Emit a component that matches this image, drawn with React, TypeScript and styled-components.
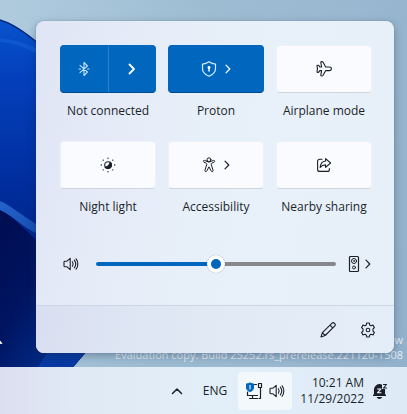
import React, { useState } from "react";
import styled, { createGlobalStyle } from "styled-components";

const ACCENT = "#0066be";
const INK = "#1b1f2a";

const GlobalStyle = createGlobalStyle`
  * { box-sizing: border-box; }
  body {
    margin: 0;
    font-family: "Open Sans", "Noto Sans", sans-serif;
    font-size: 12px;
    line-height: 16px;
    color: ${INK};
  }
  button { font: inherit; color: inherit; border: 0; padding: 0; background: none; cursor: pointer; }
  svg { display: block; }
`;

const Screen = styled.div`
  min-height: 100vh;
  display: flex;
  flex-direction: column;
  overflow: hidden;
`;

const Desktop = styled.main`
  position: relative;
  flex: 1;
  padding: 21px 13px 14px 36px;
  background: linear-gradient(100deg, #b0cbde 0%, #9dbcd2 45%, #9ab8d0 75%, #92b1cc 100%);
  overflow: hidden;
`;

const Wallpaper = styled.svg`
  position: absolute;
  left: 0;
  top: 0;
`;

const Watermark = styled.p`
  position: absolute;
  right: 4px;
  bottom: 5px;
  margin: 0;
  color: #e4edf5;
  font-size: 11px;
  line-height: 15px;
  text-align: right;
  white-space: nowrap;
`;

const Panel = styled.section`
  position: relative;
  border-radius: 8px;
  background: linear-gradient(100deg, #e0e5f5 0%, #e6edf8 30%, #e8f1fa 60%, #e7f0f9 100%);
  box-shadow: 0 0 1px rgba(40, 60, 90, 0.6), 0 3px 8px rgba(20, 40, 70, 0.35);
  overflow: hidden;
`;

const TileGrid = styled.div`
  display: grid;
  grid-template-columns: repeat(3, 1fr);
  gap: 22px 12px;
  padding: 24px 22px 0 24px;
`;

const TileCell = styled.div`
  display: flex;
  flex-direction: column;
  gap: 10px;
`;

const TileLabel = styled.span`
  text-align: center;
  white-space: nowrap;
`;

const TileFace = styled.div<{ $on?: boolean }>`
  display: flex;
  height: 48px;
  border-radius: 4px;
  border: 1px solid ${(p) => (p.$on ? ACCENT : "#eef2f8")};
  border-bottom-color: ${(p) => (p.$on ? "#004a90" : "#cdd4dc")};
  background: ${(p) => (p.$on ? ACCENT : "#f9fbfe")};
  color: ${(p) => (p.$on ? "#fff" : INK)};
`;

const TileButton = styled.button`
  flex: 1;
  display: flex;
  align-items: center;
  justify-content: center;
  gap: 8px;

  & + & { border-left: 1px solid #2b80ca; }
`;

const VolumeRow = styled.div`
  display: flex;
  align-items: center;
  padding: 40px 23px 32px 27px;
`;

const IconButton = styled.button`
  display: flex;
  align-items: center;
  gap: 5px;
`;

const Slider = styled.input<{ $value: number }>`
  appearance: none;
  flex: 1;
  min-width: 0;
  height: 18px;
  margin: 0 12px 0 17px;
  background: transparent;

  &::-webkit-slider-runnable-track {
    height: 4px;
    border-radius: 2px;
    background: linear-gradient(to right, ${ACCENT} ${(p) => p.$value}%, #85878c ${(p) => p.$value}%);
  }
  &::-webkit-slider-thumb {
    appearance: none;
    width: 18px;
    height: 18px;
    margin-top: -7px;
    border: 4px solid #fff;
    border-radius: 50%;
    background: ${ACCENT};
    box-shadow: 0 0 1px rgba(0, 0, 0, 0.4);
  }
`;

const PanelFooter = styled.footer`
  display: flex;
  justify-content: flex-end;
  align-items: center;
  gap: 24px;
  height: 48px;
  padding-right: 18px;
  border-top: 1px solid #cbd6e3;
  background: linear-gradient(100deg, #d9dff0 0%, #e1e9f5 45%, #e4eef8 100%);
`;

const Taskbar = styled.footer`
  position: relative;
  display: flex;
  align-items: center;
  justify-content: flex-end;
  height: 47px;
  padding-right: 19px;
  background: linear-gradient(90deg, #dcdff0 0%, #e0eaf5 20%, #e2eef8 55%, #deebf7 100%);
`;

const LanguageButton = styled.button`
  margin: 0 11px 0 20px;
`;

const StatusButton = styled.button`
  display: flex;
  align-items: center;
  justify-content: center;
  gap: 6px;
  width: 54px;
  height: 38px;
  border-radius: 4px;
  background: #f3f8fd;
`;

const Clock = styled.button`
  margin: 0 8px;
  text-align: right;
  white-space: nowrap;
`;

type DrawingProps = { w?: number; h?: number; box?: string; weight?: number; children: React.ReactNode };

const Drawing = ({ w = 16, h = 16, box = `0 0 ${w} ${h}`, weight = 1.1, children }: DrawingProps) => (
  <svg width={w} height={h} viewBox={box} fill="none" stroke="currentColor" strokeWidth={weight}
    strokeLinecap="round" strokeLinejoin="round" aria-hidden="true">
    {children}
  </svg>
);

const Chevron = ({ large = false }: { large?: boolean }) =>
  large ? (
    <Drawing w={8} h={12} weight={1.8}><path d="M1.5 1.5 6 6 1.5 10.5" /></Drawing>
  ) : (
    <Drawing w={6} h={10} weight={1.2}><path d="M1 1.2 4.8 5 1 8.8" /></Drawing>
  );

const BluetoothIcon = () => (
  <Drawing w={12} h={16} weight={1.1}>
    <path d="M2 4.4 9.400 11 6 14.500V1.500L9.400 5 2 11.600" stroke="#c4e3fa" />
    <path d="M1 8h1.500M9.600 8h1.400" stroke="#c4e3fa" />
  </Drawing>
);

const ShieldIcon = () => (
  <Drawing weight={1.2}>
    <path d="M8 .8C6 2.2 3.8 3 1.5 3.1v4.4c0 3.600 2.300 6.200 6.500 7.700 4.200-1.500 6.500-4.100 6.500-7.700V3.100C12.200 3 10 2.200 8 .8Z" stroke="#d6f0ff" />
    <circle cx="8" cy="6.500" r="1.400" fill="currentColor" stroke="none" />
    <path d="M8 7v3" stroke="#fff" strokeWidth="1.500" />
  </Drawing>
);

const AirplaneIcon = () => (
  <Drawing>
    <path d="M5.600 6 4.800 1.500c-.1-.5.200-.9.700-.9h.6c.3 0 .6.200.8.500L9.700 6h3.500c1.300 0 2.200.8 2.200 1.800s-.9 1.800-2.200 1.800H9.700l-2.800 4.900c-.2.300-.5.500-.8.500h-.6c-.5 0-.8-.4-.7-.9l.8-4.500H3.800l-1 1.500c-.2.200-.4.300-.6.300h-.6c-.4 0-.7-.3-.6-.7l.5-2.900L1 4.900c-.1-.4.200-.7.600-.7h.6c.2 0 .4.100.6.300l1 1.500h1.800Z" />
  </Drawing>
);

const NightIcon = () => (
  <Drawing>
    <circle cx="8" cy="8" r="3.300" />
    <path d="M10.200 5.200A3.600 3.600 0 1 1 5 10.100C8 10 9.500 8.200 10.200 5.200Z" fill="currentColor" />
    <path d="M8 1.200v.1M8 14.700v.1M1.200 8h.1M14.700 8h.1M3.200 3.200h.1M12.700 3.200h.1M3.200 12.800h.1M12.700 12.800h.1" strokeWidth="1.300" />
  </Drawing>
);

const AccessibilityIcon = () => (
  <Drawing w={14} h={16} weight={1}>
    <circle cx="7" cy="2.700" r="1.900" />
    <path d="M5 4.400 2.500 3.400C1.500 3 .8 4.500 1.900 5.100l2.300 1.100c.5.300.7.600.6 1.100l-1.900 6.100c-.3 1.300 1.400 1.800 1.900.6L7 9.800l2.200 4.200c.5 1.200 2.200.7 1.900-.6L9.200 7.300c-.1-.5.100-.8.600-1.100l2.300-1.100c1.100-.6.400-2.100-.6-1.700L9 4.400a3.200 3.200 0 0 1-4 0Z" />
  </Drawing>
);

const ShareIcon = () => (
  <Drawing>
    <path d="M6 2.200H3.600a2 2 0 0 0-2 2v8.200a2 2 0 0 0 2 2h7.800a2 2 0 0 0 2-2v-.8" />
    <path d="M9.600 1.600 14.600 6 9.600 10.400V7.900C7.100 7.900 5.500 8.700 4.200 10.500c.2-3.400 2.100-6.100 5.400-6.500V1.600Z" />
  </Drawing>
);

const SpeakerIcon = () => (
  <Drawing>
    <path d="M7.200 2.300v11.400L4 10.800H1.800a.8.800 0 0 1-.8-.8V6c0-.4.400-.8.800-.8H4l3.200-2.900Z" />
    <path d="M9.400 5.800c.9 1.300.9 3.100 0 4.400M11.300 4.200c1.700 2.200 1.700 5.400 0 7.600M13.100 2.800c2.300 3 2.300 7.400 0 10.400" />
  </Drawing>
);

const OutputDeviceIcon = () => (
  <Drawing w={12} h={18} weight={1.2}>
    <rect x="1.500" y="1.500" width="9" height="15" rx="1" />
    <circle cx="6" cy="6" r="2.500" strokeWidth="1" />
    <circle cx="6" cy="6" r=".5" strokeWidth=".8" />
    <circle cx="6" cy="12.500" r="1.500" strokeWidth="1" />
  </Drawing>
);

const PencilIcon = () => (
  <Drawing>
    <path d="m11.300 1.800.5-.5a1.900 1.900 0 0 1 2.800 2.800L5.200 13.500 1 15l1.400-4.300 8.900-8.900ZM10 3.200 12.700 5.900M2.400 10.700l2.800 2.800" />
  </Drawing>
);

const GearIcon = () => (
  <Drawing>
    <path d="m6.700 1-.4 1.900-1.400.8-1.900-.6-1.400 2.400 1.400 1.400v2.200l-1.400 1.400L3 12.900l1.900-.6 1.400.8.400 1.900h2.600l.4-1.900 1.400-.8 1.900.6 1.400-2.400L13 9.100V6.900l1.400-1.400L13 3.100l-1.900.6-1.400-.8L9.300 1H6.700Z" />
    <circle cx="8" cy="8" r="1.800" />
  </Drawing>
);

const NetworkIcon = () => (
  <Drawing w={17} h={18}>
    <path d="M8.500 2.500h2M1.500 10v3.500h10M6.500 13.500v3M3.500 16.500h8M12.500 1.500h3v4h-3zM14.500 5.500v11M13 16.500h1.500" strokeWidth="1.200" />
    <path d="M4 1C2.900 1.700 1.600 2 .5 2v3c0 2.300 1.500 3.800 3.500 4.600C6 8.800 7.500 7.300 7.500 5V2C6.400 2 5.100 1.700 4 1Z" fill={ACCENT} stroke={ACCENT} />
    <path d="M4 3.500v3.500" stroke="#fff" />
  </Drawing>
);

const BellIcon = () => (
  <Drawing>
    <path d="M2.500 11V6.500A5 5 0 0 1 9.500 2v4.500h3V11l1 1.500H1.500L2.500 11Z" fill="currentColor" />
    <path d="M5.300 14.500c1 1.200 3.200 1.200 4.200 0Z" fill="currentColor" />
    <path d="M5.500 6h3.500L5.500 9.800h3.500" stroke="#fff" />
    <path d="M11.500 1.500h3l-3 3.500h3" />
  </Drawing>
);

const BloomWallpaper = () => (
  <Wallpaper width="407" height="367" viewBox="0 0 407 367" aria-hidden="true">
    <defs>
      <linearGradient id="bloom" x1="0" y1="0" x2="0" y2="1">
        <stop offset="0" stopColor="#0853cd" />
        <stop offset=".16" stopColor="#0440bc" />
        <stop offset=".5" stopColor="#002c9b" />
        <stop offset="1" stopColor="#00156a" />
      </linearGradient>
      <linearGradient id="fold" x1="0" y1="0" x2="1" y2="1">
        <stop offset="0" stopColor="#000d50" />
        <stop offset=".4" stopColor="#001461" />
        <stop offset="1" stopColor="#053ba5" />
      </linearGradient>
      <linearGradient id="ribbon" x1="0" y1="0" x2="1" y2="1">
        <stop offset="0" stopColor="#2462cc" />
        <stop offset="1" stopColor="#174bab" />
      </linearGradient>
    </defs>
    <path d="M0 20C14 24 26 33 42 47L96 340 73 367H0Z" fill="url(#bloom)" />
    <path d="M0 20C14 24 26 33 40 45" fill="none" stroke="#052a7c" strokeWidth="1.500" />
    <path d="M0 38Q20 40 40 50V56Q20 43 0 42Z" fill="#1663d7" opacity=".5" />
    <path d="M0 208Q20 222 50 255L95 340 73 367H0Z" fill="url(#fold)" />
    <path d="M0 201C12 206 22 216 44 229V236C27 232 14 216 0 210Z" fill="url(#ribbon)" />
    <path d="M52 345H92L73 367H38Z" fill="#0739a2" />
    <path d="M92 345 73 367" stroke="#153d91" />
    <path d="M0 341 2 343.500H0Z" fill="#fff" stroke="#fff" strokeWidth=".8" />
  </Wallpaper>
);

type TileProps = { label: string; icon: React.ReactNode; on?: boolean; more?: boolean; split?: boolean };

const Tile = ({ label, icon, on, more, split }: TileProps) => {
  const id = `tile-${label.toLowerCase().replace(/ /g, "-")}`;
  return (
    <TileCell>
      <TileFace $on={on}>
        <TileButton type="button" aria-labelledby={id} aria-pressed={!!on}>
          {icon}
          {more && <Chevron />}
        </TileButton>
        {split && (
          <TileButton type="button" aria-labelledby={id} aria-haspopup="true">
            <Chevron large />
          </TileButton>
        )}
      </TileFace>
      <TileLabel id={id}>{label}</TileLabel>
    </TileCell>
  );
};

export default function App() {
  const [volume, setVolume] = useState(50);
  return (
    <>
      <GlobalStyle />
      <Screen>
        <Desktop>
          <BloomWallpaper />
          <Watermark>
            Preview
            <br />
            Evaluation copy. Build 25252.rs_prerelease.221120-1508
          </Watermark>
          <Panel aria-label="Quick settings">
            <TileGrid>
              <Tile label="Not connected" icon={<BluetoothIcon />} on split />
              <Tile label="Proton" icon={<ShieldIcon />} on more />
              <Tile label="Airplane mode" icon={<AirplaneIcon />} />
              <Tile label="Night light" icon={<NightIcon />} />
              <Tile label="Accessibility" icon={<AccessibilityIcon />} more />
              <Tile label="Nearby sharing" icon={<ShareIcon />} />
            </TileGrid>
            <VolumeRow>
              <IconButton type="button" aria-label="Mute"><SpeakerIcon /></IconButton>
              <Slider
                type="range"
                aria-label="Volume"
                min={0}
                max={100}
                value={volume}
                $value={volume}
                onChange={(e) => setVolume(Number(e.target.value))}
              />
              <IconButton type="button" aria-label="Sound output">
                <OutputDeviceIcon />
                <Chevron />
              </IconButton>
            </VolumeRow>
            <PanelFooter>
              <IconButton type="button" aria-label="Edit quick settings"><PencilIcon /></IconButton>
              <IconButton type="button" aria-label="All settings"><GearIcon /></IconButton>
            </PanelFooter>
          </Panel>
        </Desktop>
        <Taskbar>
          <IconButton type="button" aria-label="Show hidden icons">
            <Drawing w={12} h={8} weight={1.500}><path d="M1.500 6.500 6 2l4.500 4.500" /></Drawing>
          </IconButton>
          <LanguageButton type="button">ENG</LanguageButton>
          <StatusButton type="button" aria-label="Network and volume">
            <NetworkIcon />
            <SpeakerIcon />
          </StatusButton>
          <Clock type="button">
            10:21 AM
            <br />
            11/29/2022
          </Clock>
          <IconButton type="button" aria-label="Notifications"><BellIcon /></IconButton>
        </Taskbar>
      </Screen>
    </>
  );
}
